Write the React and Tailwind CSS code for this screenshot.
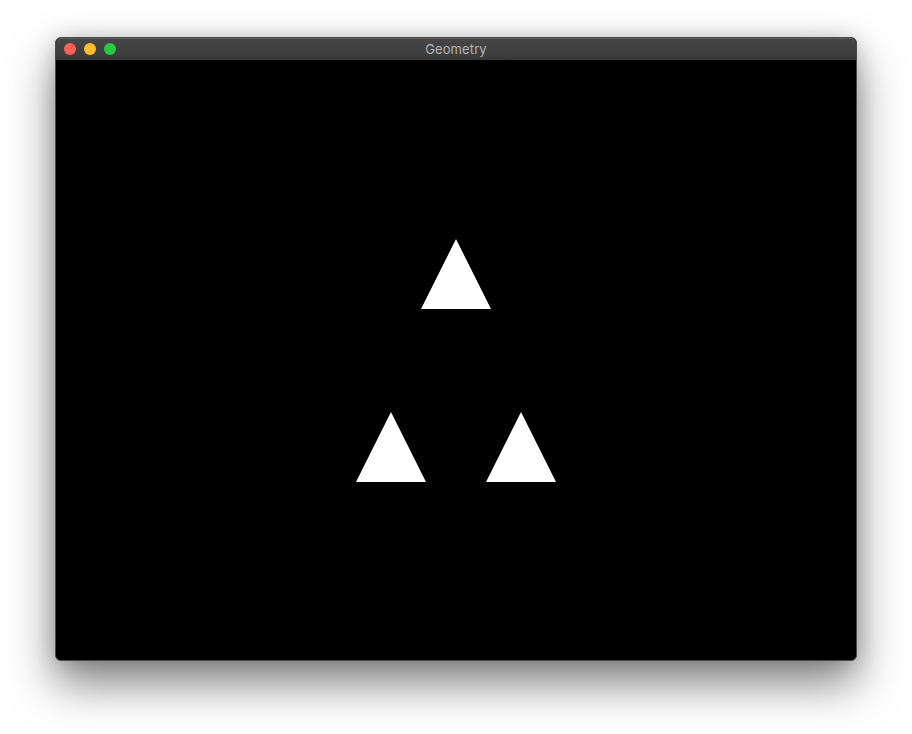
export default function App() {
  return (
    <div className="w-[912px] h-[734px] bg-white pt-[37px] pl-[55px]" style={{ fontFamily: '"Inter", "Liberation Sans", sans-serif' }}>
      <div className="w-[802px] h-[624px] rounded-[6px] border border-[#4a4a4a] bg-black overflow-hidden flex flex-col shadow-[0_22px_45px_rgba(0,0,0,0.5),0_0_20px_rgba(0,0,0,0.15)]">
        <div className="relative h-[22px] shrink-0 bg-gradient-to-b from-[#464646] to-[#3a3a3a] border-t border-[#5c5c5c] flex items-center justify-center">
          <div className="absolute left-[8px] top-[4px] flex gap-[8px]">
            <span className="w-[12px] h-[12px] rounded-full bg-[#fe5f57] block" />
            <span className="w-[12px] h-[12px] rounded-full bg-[#febc2e] block" />
            <span className="w-[12px] h-[12px] rounded-full bg-[#28c840] block" />
          </div>
          <span className="text-[13px] leading-none text-[#b4b4b4] tracking-[0.1px]">Geometry</span>
        </div>
        <div className="flex-1 bg-black">
          <svg width="800" height="600" viewBox="0 0 800 600" className="block">
            <polygon points="400,179 435,249 365,249" fill="#ffffff" />
            <polygon points="335,352 370,422 300,422" fill="#ffffff" />
            <polygon points="465,352 500,422 430,422" fill="#ffffff" />
          </svg>
        </div>
      </div>
    </div>
  );
}
